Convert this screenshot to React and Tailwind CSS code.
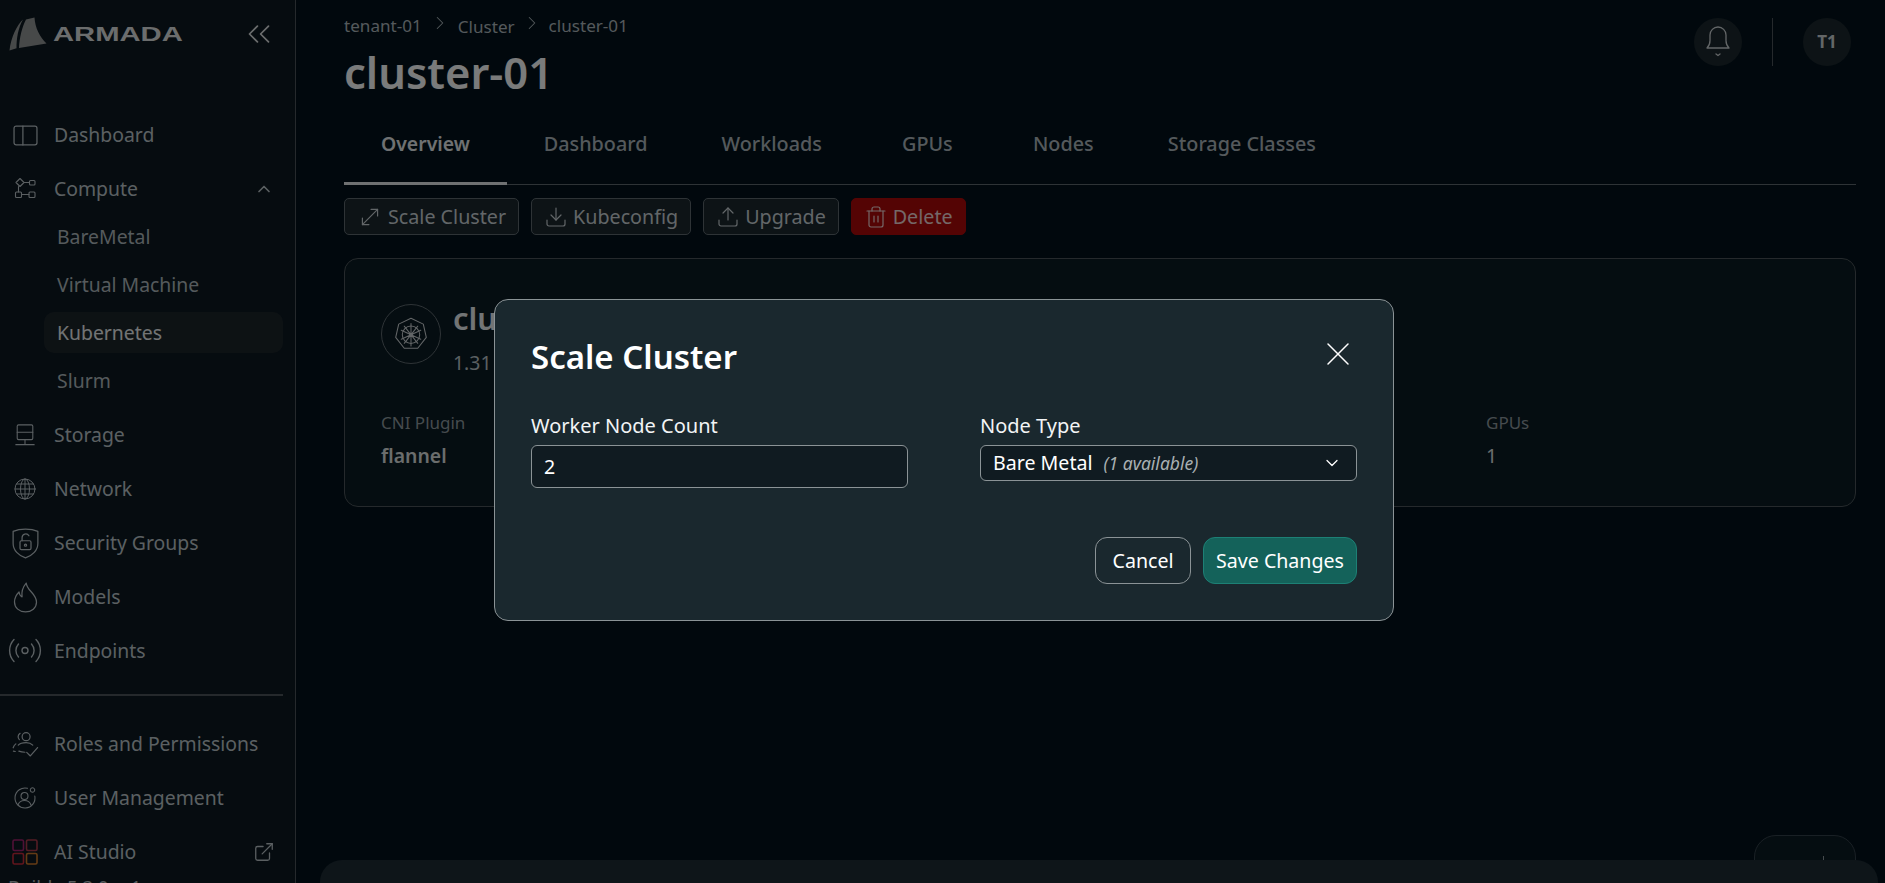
import React from 'react';
import { ChevronsLeft, ChevronUp, ChevronDown, ChevronRight, ExternalLink, X, MoveDiagonal, Download, Upload, Trash2 } from 'lucide-react';

const Svg = ({ className = '', children, vb = '0 0 24 24', sw = 1.3 }) => (
  <svg viewBox={vb} fill="none" stroke="currentColor" strokeWidth={sw} strokeLinecap="round" strokeLinejoin="round" className={className}>
    {children}
  </svg>
);

const PanelIcon = () => (
  <Svg className="w-[25px] h-[25px]" sw={1.2}>
    <rect x="1" y="3" width="22" height="18" rx="2" />
    <path d="M9.500 3v18" />
  </Svg>
);
const ComputeIcon = () => (
  <Svg className="w-[24px] h-[24px]" sw={1.1}>
    <path d="M7 1.500l4 4-4 4-4-4z" />
    <rect x="16.500" y="3.500" width="5.500" height="4.500" rx="1" />
    <rect x="2.500" y="15" width="6" height="5.500" rx="1" />
    <rect x="16" y="15" width="6" height="5.500" rx="1" />
    <path d="M11 5.500h5.500M8.500 17.500H16M5.500 9.500V15" />
  </Svg>
);
const StorageIcon = () => (
  <Svg className="w-[22px] h-[24px]" sw={1.2}>
    <rect x="3.500" y="1" width="17" height="16" rx="1.500" />
    <path d="M3.500 9h17M12 17v5M2 22.500h20" />
  </Svg>
);
const GlobeIcon = () => (
  <Svg className="w-[24px] h-[24px]" sw={1}>
    <circle cx="12" cy="12" r="10" />
    <ellipse cx="12" cy="12" rx="4.500" ry="10" />
    <path d="M12 2v20M2 12h20M3.500 7h17M3.500 17h17" />
  </Svg>
);
const ShieldIcon = () => (
  <Svg className="w-[33px] h-[33px]" sw={0.9}>
    <path d="M12 1.500c3.500 0 6.500.6 9 1.700v8.800c0 5-4 8.800-9 10.500C7 20.800 3 17 3 12V3.200C5.500 2.100 8.500 1.500 12 1.500z" />
    <rect x="8" y="10" width="8" height="6.500" rx="1" />
    <path d="M9.500 10V7.800a2.700 2.700 0 0 1 5-1.400" />
    <circle cx="12" cy="13.200" r=".8" />
  </Svg>
);
const FlameIcon = () => (
  <Svg className="w-[33px] h-[33px]" sw={0.9}>
    <path d="M12.500 1.500c.4 3 2 4.500 3.800 6.500 2 2.200 3.700 4.500 3.700 7.500 0 4-3.500 7-8 7s-8-3-8-7.200c0-3 1.400-5.400 3.300-7.300.2 1.800 1 3 2.200 3.500C9 8 10 4.500 12.500 1.500z" />
  </Svg>
);
const RadioIcon = () => (
  <Svg className="w-[34px] h-[26px]" vb="0 0 34 26" sw={1.4}>
    <circle cx="17" cy="12.500" r="3" />
    <path d="M10.500 6a9.500 9.500 0 0 0 0 13M23.500 6a9.500 9.500 0 0 1 0 13M6 1.500a16 16 0 0 0 0 22M28 1.500a16 16 0 0 1 0 22" />
  </Svg>
);
const RolesIcon = () => (
  <Svg className="w-[29px] h-[29px]" sw={1}>
    <circle cx="12.500" cy="5.500" r="3.300" />
    <path d="M7.500 2.800a3.300 3.300 0 0 0-.6 5.200M6 12.500c1.500-1.500 3.800-2 6.500-2 2.500 0 4 .5 5.500 2M4 11.500c-1 .8-1.800 2-2.200 3.200M2 17.500l1.500.3M6.500 17.500c1.500.6 3 .9 5 .9M13 18.500l3 3 6-7" />
  </Svg>
);
const UserGearIcon = () => (
  <Svg className="w-[24px] h-[24px]" sw={1.05}>
    <path d="M14.500 2.300A10 10 0 1 0 21.800 10" />
    <circle cx="11.500" cy="10" r="3.500" />
    <path d="M5 19c1-3 3.500-4.500 6.500-4.500s5.500 1.500 6.500 4.500" />
    <circle cx="19.500" cy="4" r="2.200" strokeDasharray="1.500 .8" />
  </Svg>
);
const StudioIcon = () => (
  <svg viewBox="0 0 26 26" fill="none" strokeWidth="1.6" className="w-[26px] h-[26px]">
    <rect x="1" y="1" width="10.500" height="10.500" rx="1.500" stroke="#a0226c" />
    <rect x="14.500" y="1" width="10.500" height="10.500" rx="1.500" stroke="#a83a4a" />
    <rect x="1" y="14.500" width="10.500" height="10.500" rx="1.500" stroke="#c22a3a" />
    <rect x="14.500" y="14.500" width="10.500" height="10.500" rx="1.500" stroke="#c9772a" />
  </svg>
);
const KubeIcon = () => (
  <Svg className="w-[36px] h-[36px]" sw={0.7}>
    <path d="M12 1.500l8.200 3.900 2 8.900-5.700 7.200h-9l-5.700-7.200 2-8.900z" />
    <circle cx="12" cy="12.500" r="5.800" />
    <circle cx="12" cy="12.500" r="1" />
    <path d="M12 5v15M5.500 9.500l13 6M18.500 9.500l-13 6M7.500 6.800l9 11.400M16.500 6.800l-9 11.400" />
  </Svg>
);
const BellIcon = () => (
  <Svg className="w-[30px] h-[36px]" vb="0 0 30 36" sw={1.3}>
    <path d="M4 24c1.500-1.500 3-3 3-7.500V11a8 8 0 0 1 16 0v5.500c0 4.500 1.500 6 3 7.500z" />
    <path d="M13 30l2 1.500 2-1.500" />
  </Svg>
);
const LogoMark = () => (
  <svg viewBox="0 0 38 34" className="w-[38px] h-[34px]" fill="#8f9293">
    <path d="M14 2.500C8 8 2 20 .5 33.500l7-2.200C7.500 22 9 11 14 2.500z" />
    <path d="M25.500 .5L17 2.500c-4 8-6.500 18-7 28.500l27.500-4.500C31 20 26 11 25.500 .5z" />
  </svg>
);

const NavItem = ({ icon, label, right }) => (
  <div className="flex items-center h-[54px] pr-[21px] text-[19.4px] text-[#b6c0c5]">
    <span className="w-[54px] flex justify-center pr-[4px] shrink-0">{icon}</span>
    <span className="flex-1">{label}</span>
    {right}
  </div>
);

const SubItem = ({ label, active }) => (
  <div className={`flex items-center h-[41px] mb-[7px] ml-[44px] w-[239px] pl-[13px] rounded-[10px] text-[19.4px] ${active ? 'bg-[#1b2429] text-[#e4e8ea]' : 'text-[#aab4b9]'}`}>
    {label}
  </div>
);

function Sidebar() {
  return (
    <aside className="w-[296px] shrink-0 h-full border-r border-[#4a5358] bg-[#0c1820] overflow-hidden">
      <div className="h-[108px] pt-[17px] pl-[9px] pr-[17px] flex items-start justify-between">
        <div className="flex items-center gap-[6px]">
          <LogoMark />
          <span className="w-[129px] font-['Liberation_Sans',sans-serif] font-bold text-[20px] text-[#d6dadb] origin-left scale-x-[1.46] leading-none">ARMADA</span>
        </div>
        <ChevronsLeft className="w-[38px] h-[38px] mt-[-2px] text-[#d6dadb]" strokeWidth={1.1} />
      </div>
      <NavItem icon={<PanelIcon />} label="Dashboard" />
      <NavItem icon={<ComputeIcon />} label="Compute" right={<ChevronUp className="w-[20px] h-[20px]" />} />
      <div>
        <SubItem label="BareMetal" />
        <SubItem label="Virtual Machine" />
        <SubItem label="Kubernetes" active />
        <SubItem label="Slurm" />
      </div>
      <NavItem icon={<StorageIcon />} label="Storage" />
      <NavItem icon={<GlobeIcon />} label="Network" />
      <NavItem icon={<ShieldIcon />} label="Security Groups" />
      <NavItem icon={<FlameIcon />} label="Models" />
      <NavItem icon={<RadioIcon />} label="Endpoints" />
      <div className="w-[283px] h-[2px] mt-[16px] mb-[21px] bg-[#4a5358]" />
      <NavItem icon={<RolesIcon />} label="Roles and Permissions" />
      <NavItem icon={<UserGearIcon />} label="User Management" />
      <NavItem icon={<StudioIcon />} label="AI Studio" right={<ExternalLink className="w-[22px] h-[22px] mr-[-1px]" strokeWidth={1.4} />} />
      <div className="pl-[8px] text-[18.500px] leading-[20px] mt-[-2px] text-[#aab4b9]">Build : 5.3.0-rc1</div>
    </aside>
  );
}

const tabs = [
  { label: 'Overview', active: true },
  { label: 'Dashboard' },
  { label: 'Workloads' },
  { label: 'GPUs', cls: 'min-w-[137px]' },
  { label: 'Nodes', cls: 'min-w-[135px]' },
  { label: 'Storage Classes' },
];

const ActionButton = ({ icon, label, danger }) => (
  <button className={`flex items-center gap-[5px] h-[37px] pt-[1px] px-[12px] rounded-[5px] border text-[19.700px] ${danger ? 'bg-[#a80808] border-[#a80808] text-[#e8d0d0]' : 'bg-[#1a262d] border-[#5c676d] text-[#c4ccd0]'}`}>
    {icon}
    {label}
  </button>
);

function Main() {
  return (
    <main className="flex-1 min-w-0 pl-[48px] pr-[29px] h-full bg-[#02111a] overflow-hidden">
      <div className="flex justify-between items-start">
        <div>
          <div className="flex items-center h-[52px] pb-[1px] text-[17.100px] text-[#a9b3b8]">
            <span>tenant-01</span>
            <ChevronRight className="w-[22px] h-[22px] mx-[7px] mt-[-5px]" strokeWidth={1.1} />
            <span className="mt-[2px]">Cluster</span>
            <ChevronRight className="w-[22px] h-[22px] mx-[6px] mt-[-5px]" strokeWidth={1.1} />
            <span>cluster-01</span>
          </div>
          <h1 className="text-[43.500px] font-semibold leading-[40px] text-[#f4f6f7]">cluster-01</h1>
        </div>
        <div className="flex items-center mt-[18px] mr-[5px]">
          <div className="w-[48px] h-[48px] rounded-full bg-[#1a262c] flex items-center justify-center text-[#c6cccf]"><BellIcon /></div>
          <div className="w-px h-[48px] bg-[#4a5358] mx-[30px]" />
          <div className="w-[48px] h-[48px] rounded-full bg-[#1a262c] flex items-center justify-center text-[17px] font-bold text-[#c6cccf]">T1</div>
        </div>
      </div>
      <div className="flex h-[73px] mt-[20px] border-b border-[#5c676d]">
        {tabs.map((t) => (
          <div key={t.label} className={`relative flex items-center justify-center px-[37px] pb-[9px] ${t.active ? 'text-[19.400px] font-semibold text-[#dfe3e5]' : 'text-[19.800px] font-medium text-[#a9b3b8]'} ${t.cls || ''}`}>
            {t.label}
            {t.active && <span className="absolute left-0 right-0 bottom-[-1px] h-[3px] bg-[#dfe3e5]" />}
          </div>
        ))}
      </div>
      <div className="flex gap-[12px] mt-[13px]">
        <ActionButton label="Scale Cluster" icon={<MoveDiagonal className="w-[26px] h-[26px]" strokeWidth={1.1} />} />
        <ActionButton label="Kubeconfig" icon={<Download className="w-[24px] h-[24px]" strokeWidth={1.2} />} />
        <ActionButton label="Upgrade" icon={<Upload className="w-[24px] h-[24px]" strokeWidth={1.2} />} />
        <ActionButton danger label="Delete" icon={<Trash2 className="w-[24px] h-[24px]" strokeWidth={1.2} />} />
      </div>
      <section className="mt-[23px] h-[249px] rounded-[14px] border border-[#4a5358] bg-[#0b1a22] px-[36px] pt-[45px]">
        <div className="flex items-start gap-[12px] h-[60px]">
          <div className="w-[60px] h-[60px] rounded-full border border-[#5c676d] flex items-center justify-center text-[#c6cccf]"><KubeIcon /></div>
          <div className="mt-[-4px]">
            <div className="text-[31px] font-semibold leading-[36px] text-[#e4e8ea]">cluster-01</div>
            <div className="mt-[13px] text-[19.4px] leading-[28px] text-[#b6c0c5]">1.31</div>
          </div>
        </div>
        <div className="flex justify-between mt-[46px] pr-[303px]">
          <div>
            <div className="text-[17px] leading-[26px] text-[#8c979c]">CNI Plugin</div>
            <div className="mt-[6px] text-[19.4px] font-semibold leading-[28px] text-[#d6dadb]">flannel</div>
          </div>
          <div className="w-[30px]">
            <div className="text-[17px] leading-[26px] text-[#8c979c]">GPUs</div>
            <div className="mt-[6px] text-[19.4px] leading-[28px] text-[#d6dadb]">1</div>
          </div>
        </div>
      </section>
    </main>
  );
}

function ScaleModal() {
  return (
    <div className="fixed inset-0 z-20 bg-black/50 flex items-start justify-start pt-[299px] pl-[494px]">
      <div className="w-[900px] h-[322px] rounded-[14px] border border-[#8b9396] bg-[#1a282e] px-[36px] pt-[25px] text-white">
        <div className="flex items-start justify-between h-[88px]">
          <h2 className="text-[33px] leading-[64px] font-semibold">Scale Cluster</h2>
          <X className="w-[40px] h-[40px] mt-[9px] mr-[-1px]" strokeWidth={0.9} />
        </div>
        <div className="grid grid-cols-2 gap-x-[72px]">
          <div>
            <label className="block h-[27px] text-[20px] leading-[26px] mb-[5px] text-[#f2f4f5]">Worker Node Count</label>
            <div className="flex items-center h-[43px] rounded-[6px] border border-[#8b9396] bg-[#101b21] pl-[12px] text-[19.6px]">2</div>
          </div>
          <div>
            <label className="block h-[27px] text-[20px] leading-[26px] mb-[5px] text-[#f2f4f5]">Node Type</label>
            <div className="flex items-center h-[36px] rounded-[6px] border border-[#8b9396] bg-[#101b21] pl-[12px] pr-[14px] text-[19.6px]">
              <span>Bare Metal</span>
              <span className="ml-[11px] mt-[1px] italic text-[17.500px] text-[#a9b0b3]">(1 available)</span>
              <ChevronDown className="w-[20px] h-[20px] ml-auto" strokeWidth={1.5} />
            </div>
          </div>
        </div>
        <div className="flex justify-end gap-[12px] mt-[49px]">
          <button className="h-[47px] w-[96px] rounded-[12px] border border-[#8b9396] text-[19.6px]">Cancel</button>
          <button className="h-[47px] w-[154px] rounded-[12px] border border-[#1d8075] bg-[#14625a] text-[19.6px]">Save Changes</button>
        </div>
      </div>
    </div>
  );
}

export default function App() {
  return (
    <div className="relative flex h-screen overflow-hidden font-['Noto_Sans',sans-serif]">
      <Sidebar />
      <Main />
      {/* chat launcher peeking in behind the bottom bar */}
      <div className="absolute left-[1754px] top-[835px] w-[102px] h-[60px] rounded-[22px] border border-[#33404a] bg-[#0b1a22]">
        <span className="absolute left-[68px] top-[20px] w-px h-[8px] bg-[#8c979c]" />
      </div>
      <div className="absolute left-[320px] right-[7px] top-[860px] h-[60px] rounded-[22px] bg-[#1c2a33]" />
      <ScaleModal />
    </div>
  );
}
